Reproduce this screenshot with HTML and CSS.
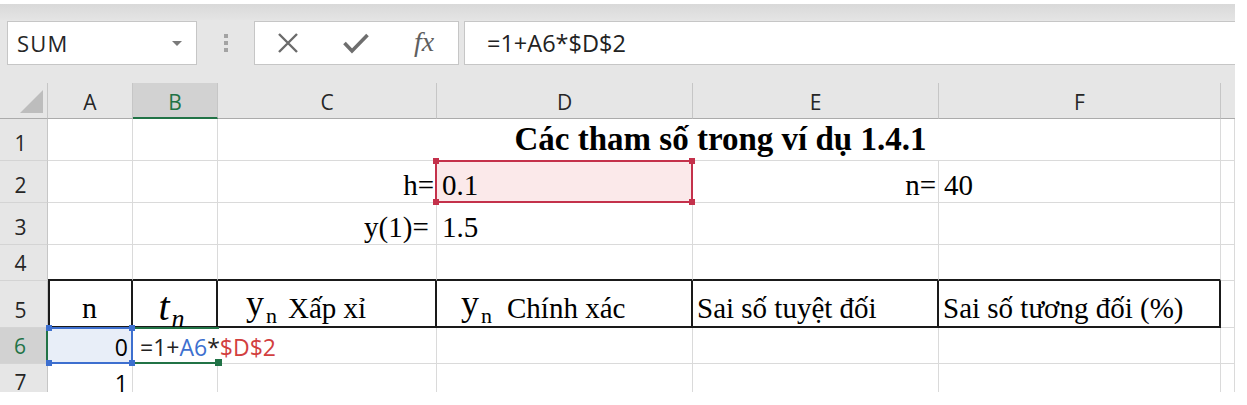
FILE: index.html
```html
<!DOCTYPE html>
<html lang="vi">
<head>
<meta charset="utf-8">
<title>Excel</title>
<link rel="stylesheet" href="styles.css">
</head>
<body>
<div class="app">
  <div class="topstrip"></div>
  <div class="fbar">
    <div class="namebox"><span class="nb-text">SUM</span><span class="dd"></span></div>
    <div class="grip"><i></i><i></i><i></i></div>
    <div class="fxbox">
      <span class="ico"><svg width="22" height="20" viewBox="0 0 22 20"><path d="M2 1 L20 19 M20 1 L2 19" stroke="#6b6b6b" stroke-width="2.4" fill="none"/></svg></span>
      <span class="ico"><svg width="26" height="22" viewBox="0 0 26 22"><path d="M1.5 11 L9 19 L24.5 3" stroke="#6e6e6e" stroke-width="3.6" fill="none"/></svg></span>
      <span class="ico fx">fx</span>
    </div>
    <div class="formula">=1+A6*$D$2</div>
  </div>
  <div class="sheet">
    <div class="corner"><div class="tri"></div></div>
    <div class="ch">A</div>
    <div class="ch act">B</div>
    <div class="ch">C</div>
    <div class="ch">D</div>
    <div class="ch">E</div>
    <div class="ch">F</div>
    <div class="ch last"></div>

    <div class="rh">1</div>
    <div class="c"></div>
    <div class="c"></div>
    <div class="c title">Các tham số trong ví dụ 1.4.1</div>
    <div class="c"></div>

    <div class="rh">2</div>
    <div class="c"></div>
    <div class="c"></div>
    <div class="c r">h=</div>
    <div class="c refr"><span>0.1</span><span class="hl red"><i class="tl"></i><i class="tr"></i><i class="bl"></i><i class="br"></i></span></div>
    <div class="c r">n=</div>
    <div class="c">40</div>
    <div class="c"></div>

    <div class="rh">3</div>
    <div class="c"></div>
    <div class="c"></div>
    <div class="c r r0">y(1)=&nbsp;</div>
    <div class="c">1.5</div>
    <div class="c"></div>
    <div class="c"></div>
    <div class="c"></div>

    <div class="rh">4</div>
    <div class="c bb"></div>
    <div class="c bb"></div>
    <div class="c bb"></div>
    <div class="c bb"></div>
    <div class="c bb"></div>
    <div class="c bb"></div>
    <div class="c"></div>

    <div class="rh">5</div>
    <div class="c th thl ctr nn">n</div>
    <div class="c th ctr tcell"><span class="in"><span class="tv">t</span><sub class="ts">n</sub></span></div>
    <div class="c th ycell1"><span class="in"><span class="yv">y</span><sub class="ys">n</sub><span class="lbl1">Xấp xỉ</span></span></div>
    <div class="c th ycell2"><span class="in"><span class="yv">y</span><sub class="ys">n</sub><span class="lbl2">Chính xác</span></span></div>
    <div class="c th">Sai số tuyệt đối</div>
    <div class="c th">Sai số tương đối (%)</div>
    <div class="c"></div>

    <div class="rh act">6</div>
    <div class="c num refb"><span>0</span><span class="hl blue"><i class="tl"></i><i class="tr"></i><i class="bl"></i><i class="br"></i></span></div>
    <div class="c edit"><span class="in">=1+<span class="rb">A6</span>*<span class="rr">$D$2</span></span><span class="hl green"><i class="br"></i></span></div>
    <div class="c"></div>
    <div class="c"></div>
    <div class="c"></div>
    <div class="c"></div>
    <div class="c"></div>

    <div class="rh">7</div>
    <div class="c num">1</div>
    <div class="c"></div>
    <div class="c"></div>
    <div class="c"></div>
    <div class="c"></div>
    <div class="c"></div>
    <div class="c"></div>
  </div>
</div>
</body>
</html>
```

FILE: styles.css
```css
* { box-sizing: border-box; }
html, body { margin: 0; padding: 0; background: #fff; }

.app {
  width: 1235px;
  height: 388px;
  margin-top: 4px;
  background: #e6e6e6;
  overflow: hidden;
  display: flex;
  flex-direction: column;
  font-family: "Open Sans", "Noto Sans", sans-serif;
}

.topstrip {
  flex: none;
  height: 16px;
  background: linear-gradient(#d9d9d9, #e4e4e4);
}

.fbar {
  flex: none;
  height: 45px;
  padding: 1px 0 0 7px;
  margin-bottom: 18px;
  display: flex;
}

.namebox {
  width: 190px;
  height: 44px;
  background: #fff;
  border: 1px solid #c6c6c6;
  display: flex;
  align-items: center;
  justify-content: space-between;
  padding: 0 14px 0 9px;
  font-size: 22px;
  color: #262626;
}
.nb-text { letter-spacing: 1.2px; }
.dd {
  width: 0;
  height: 0;
  border-left: 5px solid transparent;
  border-right: 5px solid transparent;
  border-top: 5px solid #7a7a7a;
}

.grip {
  display: flex;
  flex-direction: column;
  justify-content: center;
  gap: 3px;
  margin: 0 26px 0 27px;
}
.grip i {
  display: block;
  width: 4px;
  height: 4px;
  background: #a3a3a3;
}

.fxbox {
  width: 205px;
  height: 44px;
  background: #fff;
  border: 1px solid #c6c6c6;
  display: flex;
  align-items: center;
  padding-left: 13px;
  gap: 28px;
}
.ico {
  width: 40px;
  display: flex;
  justify-content: center;
  align-items: center;
}
.fx {
  font-family: "Liberation Serif", serif;
  font-style: italic;
  font-size: 28px;
  color: #5f5f5f;
  line-height: 1;
  padding-bottom: 3px;
}

.formula {
  flex: 1;
  height: 44px;
  margin-left: 5px;
  background: #fff;
  border: 1px solid #c6c6c6;
  border-right: none;
  display: flex;
  align-items: center;
  padding-left: 22px;
  font-size: 23.5px;
  color: #222;
}

.sheet {
  flex: none;
  display: grid;
  grid-template-columns: 48px 85px 85px 219px 256px 246px 282px 14px;
  grid-template-rows: 36px 42px 42px 42px 36px 47px 36px 36px;
  background: #fff;
}

.corner {
  background: #e6e6e6;
  border-right: 1px solid #c6c6c6;
  border-bottom: 1px solid #ababab;
  display: flex;
  align-items: flex-end;
  justify-content: flex-end;
  padding: 0 4px 5px 0;
}
.tri {
  width: 0;
  height: 0;
  border-left: 23px solid transparent;
  border-bottom: 23px solid #bdbdbd;
}

.ch {
  background: #e6e6e6;
  border-right: 1px solid #c6c6c6;
  border-bottom: 1px solid #ababab;
  display: flex;
  align-items: center;
  justify-content: center;
  padding-top: 3px;
  font-size: 21px;
  color: #262626;
}
.ch.last { border-right: none; }
.ch.act {
  background: #d2d2d2;
  color: #217346;
  border-bottom: 2px solid #217346;
}

.rh {
  background: #e6e6e6;
  border-right: 1px solid #c6c6c6;
  border-bottom: 1px solid #d4d4d4;
  display: flex;
  align-items: flex-end;
  justify-content: center;
  padding: 0 6px 6px 0;
  font-size: 21px;
  line-height: 1;
  color: #262626;
}
.rh.act {
  background: #d2d2d2;
  color: #217346;
  border-right: 2px solid #217346;
}

.c {
  border-right: 1px solid #dadada;
  border-bottom: 1px solid #dadada;
  display: flex;
  align-items: flex-end;
  padding: 0 2px 2px 5px;
  font-family: "Liberation Serif", "Times New Roman", serif;
  font-size: 29px;
  line-height: 1;
  white-space: nowrap;
  color: #000;
}
.r { justify-content: flex-end; }
.r0 { padding-right: 0; }
.ctr { justify-content: center; }
.in { display: block; }

.title {
  grid-column: span 4;
  justify-content: center;
  font-weight: bold;
  font-size: 33px;
  padding-bottom: 4px;
}

.bb { border-bottom: 2px solid #1a1a1a; }
.th {
  border-bottom: 2px solid #1a1a1a;
  border-right: 2px solid #1a1a1a;
  padding-bottom: 3px;
  padding-left: 4px;
}
.thl { border-left: 2px solid #1a1a1a; }
.nn { font-size: 30px; padding-left: 0; }

.tcell { padding-right: 10px; }
.tv {
  font-size: 40px;
  font-style: italic;
  line-height: 0;
  vertical-align: -2px;
}
.ts {
  font-size: 26px;
  font-style: italic;
  line-height: 0;
  vertical-align: -9px;
  margin-left: 2px;
}

.ycell1 { padding-left: 28px; }
.ycell2 { padding-left: 24px; }
.yv {
  font-size: 36px;
  line-height: 0;
  vertical-align: 3px;
}
.ys {
  font-size: 22px;
  line-height: 0;
  vertical-align: -5px;
  margin-left: 2px;
}
.lbl1 { margin-left: 11px; }
.lbl2 { margin-left: 15px; }

.num {
  justify-content: flex-end;
  padding: 0 4px 4px 0;
  font-family: "Open Sans", "Noto Sans", sans-serif;
  font-size: 23px;
}

.refr {
  position: relative;
  background: #fbe9ea;
}
.refb {
  position: relative;
  z-index: 2;
  background: #e8eef8;
}
.edit {
  position: relative;
  z-index: 1;
  border-right-color: transparent;
  padding: 0 0 4px 7px;
  font-family: "Open Sans", "Noto Sans", sans-serif;
  font-size: 23px;
  color: #222;
}
.rb { color: #3d6fcf; }
.rr { color: #d23f3f; }

.hl {
  position: absolute;
  left: -2px;
  top: -1px;
  right: -1px;
  bottom: -1px;
  border: 2px solid #c4314b;
}
.hl i {
  position: absolute;
  width: 6px;
  height: 6px;
  background: #c4314b;
}
.hl .tl { left: -4px; top: -4px; }
.hl .tr { right: -4px; top: -4px; }
.hl .bl { left: -4px; bottom: -4px; }
.hl .br { right: -4px; bottom: -4px; }

.hl.blue {
  left: 0;
  border-color: #3d6fcf;
  border-left: none;
}
.hl.blue i { background: #3d6fcf; }
.hl.blue .tl, .hl.blue .bl { left: -2px; }

.hl.green {
  left: 0;
  right: -2px;
  border-color: #217346;
  border-left: none;
  border-right: none;
}
.hl.green i {
  background: #217346;
  width: 7px;
  height: 7px;
}
.hl.green .br { right: -3px; bottom: -4px; }
```
